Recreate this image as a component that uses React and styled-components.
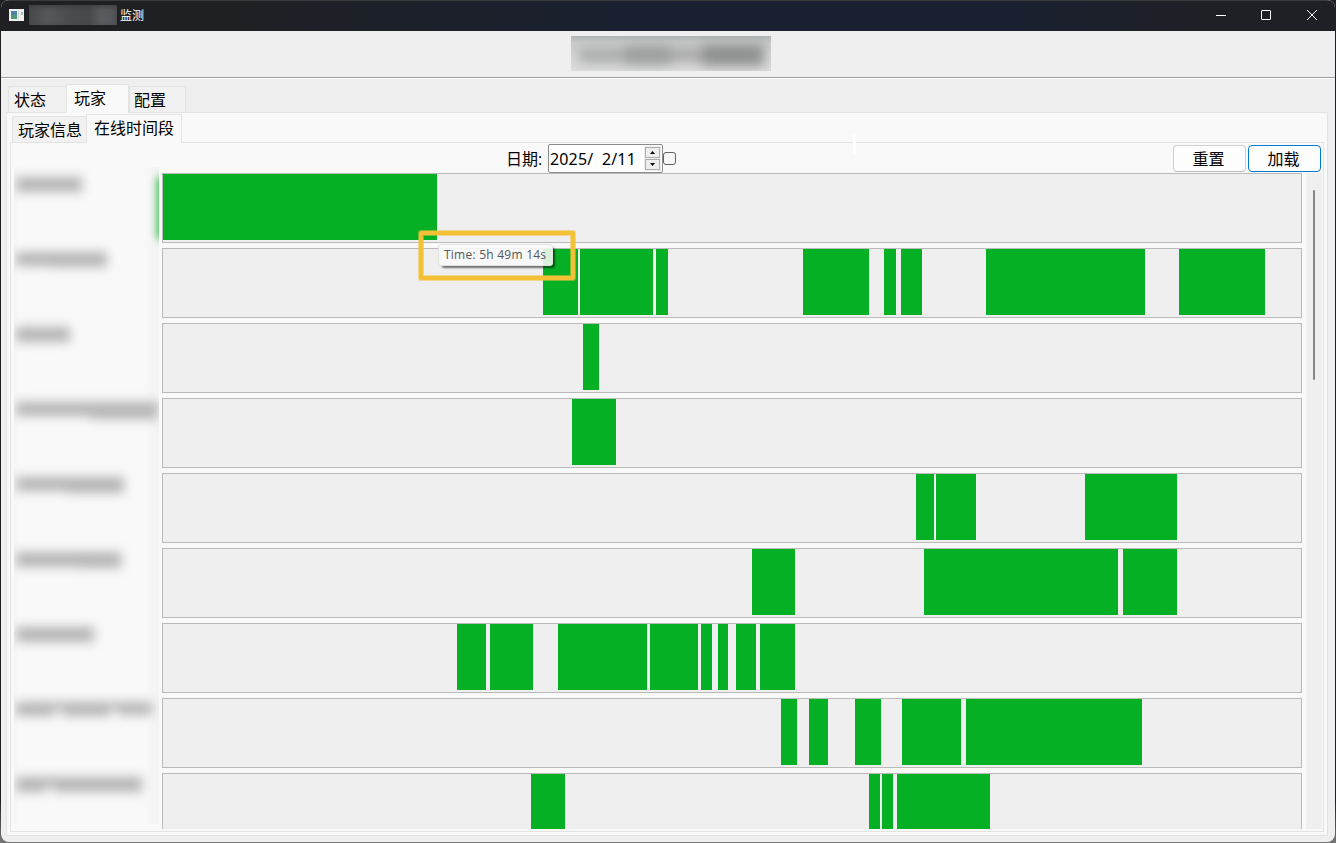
import React from "react";
import styled, { createGlobalStyle } from "styled-components";

const Global = createGlobalStyle`
  * { box-sizing: border-box; }
  body { margin: 0; background: #29292b; overflow: hidden; }
  button, input { font: inherit; }
`;

const Desktop = styled.div`
  width: 1336px;
  height: 843px;
  padding: 0 1px 1px;
  background: linear-gradient(#202022 0 800px, #777 843px);
  font: 16px/20px "Open Sans", "Noto Sans CJK SC", sans-serif;
  color: #000;
`;
const Window = styled.main`
  width: 1334px;
  height: 842px;
  display: flex;
  flex-direction: column;
  overflow: hidden;
  border-radius: 8px;
  background: #efefef;
`;
const TitleBar = styled.header`
  height: 31px;
  flex: none;
  display: flex;
  align-items: center;
  padding-left: 8px;
  border-top: 1px solid #3a3b3c;
  color: #fff;
  font-size: 12px;
  line-height: 16px;
  background: linear-gradient(90deg, #1e2023 0, #1e2023 16%, #1a2031 50%, #1a2031 74%, #1e2025 90%);
`;
const AppIcon = styled.svg`
  width: 15px;
  height: 12px;
  margin-bottom: 2px;
`;
const HiddenTitle = styled.span`
  width: 88px;
  height: 20px;
  margin: 0 3px 3px 5px;
  background: linear-gradient(90deg, #47494c, #55575a 22%, #484a4d 50%, #47494d 68%, #5b5c5f 82%, #535457);
  box-shadow: inset 0 2px 4px #3d3f42;
`;
const TitleText = styled.span`
  margin-bottom: 1px;
`;
const Controls = styled.div`
  margin-left: auto;
  display: flex;
  height: 30px;
`;
const Control = styled.button`
  width: 46px;
  height: 28px;
  padding: 0;
  border: 0;
  background: none;
  display: grid;
  place-items: center;
  svg { width: 12px; height: 12px; fill: none; stroke: #fff; }
`;
const Banner = styled.div`
  height: 48px;
  flex: none;
  display: flex;
  justify-content: center;
  align-items: flex-start;
  padding: 5px 0 0 6px;
  border-bottom: 1px solid #fff;
  box-shadow: inset 0 -1px #a0a0a0;
`;
const HiddenHeading = styled.div`
  width: 200px;
  height: 35px;
  padding: 2px 7px 0;
  overflow: hidden;
  background: linear-gradient(#b0b3b4 0, #c9cbcb 18%, #d6d7d7 50%, #dedede);
`;
const HeadingBlur = styled.div`
  height: 33px;
  display: flex;
  align-items: center;
  filter: blur(6px);
`;
const HeadingSmudge = styled.i`
  flex: ${(p) => p.$grow};
  height: ${(p) => p.$h}px;
  background: ${(p) => p.$tone};
`;
const Tabs = styled.nav`
  display: flex;
  align-items: flex-end;
  position: relative;
  z-index: 1;
  margin-bottom: -1px;
  flex: none;
`;
const OuterTabs = styled(Tabs)`
  height: 29px;
  margin: 5px 0 -1px 7px;
`;
const InnerTabs = styled(Tabs)`
  height: 29px;
  margin-left: 5px;
`;
const Tab = styled.button`
  width: ${(p) => p.$w}px;
  height: ${(p) => (p.$active ? 29 : 27)}px;
  padding: ${(p) => (p.$active ? "0 0 1px" : "0")};
  padding-left: ${(p) => p.$inset}px;
  border: 1px solid #e3e3e3;
  border-bottom-color: ${(p) => (p.$active ? "#f9f9f9" : "#e3e3e3")};
  border-right-width: ${(p) => (p.$join ? 0 : 1)}px;
  border-radius: 2px 2px 0 0;
  background: ${(p) => (p.$active ? "#f9f9f9" : "#f1f1f1")};
  color: #000;
  text-align: left;
  white-space: nowrap;
`;
const OuterPane = styled.section`
  height: 724px;
  margin: 0 7px 0 5px;
  padding: 1px 3px 3px 0;
  border: 1px solid #e3e3e3;
  background: #f9f9f9;
`;
const InnerPane = styled.section`
  width: 1314px;
  height: 690px;
  margin-left: 3px;
  padding: 1px 0 2px 3px;
  border: 1px solid #e3e3e3;
  background: #f9f9f9;
`;
const Toolbar = styled.div`
  height: 29px;
  display: flex;
  align-items: center;
  position: relative;
`;
const DateLabel = styled.label`
  margin-left: 492px;
  width: 42px;
  flex: none;
  white-space: nowrap;
`;
const DateBox = styled.div`
  width: 115px;
  height: 29px;
  flex: none;
  display: flex;
  align-items: center;
  padding-left: 1px;
  border: 1px solid #8b8b8b;
  border-radius: 2px;
  background: #fff;
`;
const DateText = styled.span`
  width: 94px;
  white-space: pre;
  font-family: "Noto Sans", sans-serif;
  letter-spacing: 0.15px;
`;
const Spinner = styled.div`
  width: 17px;
  height: 25px;
  padding: 1px;
  display: grid;
  grid-template-rows: 11px 11px;
  gap: 1px;
  background: #efefef;
`;
const Step = styled.button`
  padding: 0;
  border: 1px solid #adadad;
  background: #eee;
  display: grid;
  place-items: center;
  svg { width: 5px; height: 3px; display: block; }
`;
const Check = styled.input`
  appearance: none;
  width: 13px;
  height: 13px;
  flex: none;
  margin: 0;
  border: 1px solid #626262;
  border-radius: 3px;
  background: #f6f6f6;
`;
const Actions = styled.div`
  display: flex;
  gap: 2px;
  margin-left: auto;
  padding-right: 2px;
`;
const Action = styled.button`
  width: 73px;
  height: 27px;
  padding: 0 2px 0 0;
  border: 1px solid ${(p) => (p.$primary ? "#0078d4" : "#d0d0d0")};
  border-bottom-color: ${(p) => (p.$primary ? "#0078d4" : "#bcbcbc")};
  border-radius: 4px;
  background: #fdfdfd;
  color: #000;
`;
const StrayMark = styled.i`
  position: absolute;
  left: 839px;
  top: -11px;
  width: 3px;
  height: 21px;
  background: #fff;
`;
const Timeline = styled.div`
  display: flex;
  height: 656px;
`;
const ScrollArea = styled.div`
  height: 656px;
  display: flex;
  overflow: hidden;
`;
const Names = styled.aside`
  width: 145px;
  height: 657px;
  flex: none;
  margin: -6px 3px 0 0;
  overflow: hidden;
  background: linear-gradient(90deg, #f5f5f5 0, #f9f9f9 5px, #f9f9f9 132px, #f4f4f4 140px);
`;
const NameSlot = styled.div`
  height: 75px;
  padding: 10px 0 0 2px;
  display: flex;
  align-items: flex-start;
`;
const NameBlur = styled.div`
  display: flex;
  align-items: flex-start;
  filter: blur(5.5px);
`;
const NameSmudge = styled.i`
  flex: none;
  width: ${(p) => p.$w}px;
  height: ${(p) => p.$h + 3}px;
  background: #b4b4b4;
`;
const GreenBleed = styled.i`
  flex: none;
  width: 8px;
  height: 62px;
  margin: 0 -7px 0 auto;
  background: #06b025;
  filter: blur(4px);
`;
const Tracks = styled.div`
  width: 1140px;
  display: flex;
  flex-direction: column;
  gap: 5px;
  position: relative;
`;
const Track = styled.div`
  height: 70px;
  flex: none;
  display: flex;
  border: 1px solid #bababa;
  background: #efefef;
`;
const Bar = styled.i`
  flex: none;
  height: 66px;
  background: #06b025;
`;
const ScrollTrack = styled.div`
  width: 16px;
  height: 656px;
  margin-left: 4px;
  padding: 17px 0 0 7px;
  background: #efefef;
`;
const Thumb = styled.div`
  width: 2px;
  height: 190px;
  border-radius: 1px;
  background: #868686;
`;
const Highlight = styled.div`
  position: absolute;
  left: 257px;
  top: 58px;
  width: 156px;
  height: 49px;
  border: 4px solid #f4c036;
  border-radius: 2px;
  box-shadow: 0 0 0 1px #f4c03688, inset 0 0 0 1px #f4c03688;
`;
const Tooltip = styled.div`
  position: absolute;
  left: 276px;
  top: 71px;
  width: 115px;
  height: 22px;
  padding: 0 0 0 5px;
  border: 1px solid #e2e2e2;
  border-radius: 3px;
  background: #f9f9f9de;
  box-shadow: 3px 3px 2px -1px #0008;
  color: #575757;
  font: 12px/20px "Open Sans", sans-serif;
  letter-spacing: 0.24px;
  white-space: nowrap;
`;

// Online periods per player, as [start, end] offsets on the day's time axis.
const periods = [
  [[163, 437]],
  [[543, 578], [580, 653], [656, 668], [803, 869], [884, 896], [901, 922], [986, 1145], [1179, 1265]],
  [[583, 599]],
  [[572, 616]],
  [[916, 934], [936, 976], [1085, 1177]],
  [[752, 795], [924, 1118], [1123, 1177]],
  [[457, 486], [490, 533], [558, 647], [650, 698], [701, 712], [718, 728], [736, 756], [760, 795]],
  [[781, 797], [809, 828], [855, 881], [902, 961], [966, 1142]],
  [[531, 565], [869, 880], [882, 893], [897, 990]],
];
const dayStart = 163;

// Widths and heights of the obscured word parts in each player's name.
const nameParts = [
  [[66, 12]],
  [[34, 11], [57, 12]],
  [[54, 12]],
  [[74, 11], [68, 14]],
  [[51, 11], [57, 13]],
  [[62, 12], [43, 13]],
  [[78, 12]],
  [[38, 11], [8, 4], [48, 11], [8, 4], [34, 10]],
  [[30, 12], [8, 6], [88, 12]],
];

function TrackRow({ bars }) {
  return (
    <Track>
      {bars.map(([start, end], i) => (
        <Bar key={start} style={{ marginLeft: start - (i ? bars[i - 1][1] : dayStart), width: end - start }} />
      ))}
    </Track>
  );
}

export default function App() {
  return (
    <Desktop>
      <Global />
      <Window>
        <TitleBar>
          <AppIcon viewBox="0 0 15 12">
            <path fill="#f0f0f0" d="M0 0h15v12H0z" />
            <path fill="#4b87a1" d="M2 2h6v4H2z" />
            <path fill="#4e9a77" d="M2 6h6v4H2z" />
            <path fill="#d2d5d5" d="M9 1h1v10H9z" />
            <path fill="#9ebfad" d="M12 3h2v3h-2z" />
          </AppIcon>
          <HiddenTitle />
          <TitleText>监测</TitleText>
          <Controls>
            <Control aria-label="minimize"><svg viewBox="0 0 12 12"><path d="M2 6.5h10" /></svg></Control>
            <Control aria-label="maximize"><svg viewBox="0 0 12 12"><rect x="1.5" y="1.5" width="9" height="9" rx=".5" /></svg></Control>
            <Control aria-label="close"><svg viewBox="0 0 12 12"><path d="m1 1 10 10M11 1 1 11" /></svg></Control>
          </Controls>
        </TitleBar>
        <Banner>
          <HiddenHeading>
            <HeadingBlur>
              <HeadingSmudge $grow={3} $h={16} $tone="#acaeae" />
              <HeadingSmudge $grow={3} $h={20} $tone="#9b9e9d" />
              <HeadingSmudge $grow={2} $h={15} $tone="#a9aaa9" />
              <HeadingSmudge $grow={4} $h={22} $tone="#8f9190" />
            </HeadingBlur>
          </HiddenHeading>
        </Banner>
        <OuterTabs>
          <Tab $w={58} $inset={5} $join>状态</Tab>
          <Tab $w={63} $inset={7} $active>玩家</Tab>
          <Tab $w={57} $inset={4}>配置</Tab>
        </OuterTabs>
        <OuterPane>
          <InnerTabs>
            <Tab $w={74} $inset={5} $join>玩家信息</Tab>
            <Tab $w={96} $inset={7} $active>在线时间段</Tab>
          </InnerTabs>
          <InnerPane>
            <Toolbar>
              <DateLabel>日期:</DateLabel>
              <DateBox>
                <DateText>2025/  2/11</DateText>
                <Spinner>
                  <Step aria-label="up"><svg viewBox="0 0 5 3"><path d="M0 3 2.5 0 5 3z" /></svg></Step>
                  <Step aria-label="down"><svg viewBox="0 0 5 3"><path d="m0 0 2.5 3L5 0z" /></svg></Step>
                </Spinner>
              </DateBox>
              <Check type="checkbox" />
              <Actions>
                <Action>重置</Action>
                <Action $primary>加载</Action>
              </Actions>
              <StrayMark />
            </Toolbar>
            <Timeline>
              <Names>
                {nameParts.map((parts, row) => (
                  <NameSlot key={row}>
                    <NameBlur>
                      {parts.map(([w, h], i) => <NameSmudge key={i} $w={w} $h={h} />)}
                    </NameBlur>
                    {row === 0 && <GreenBleed />}
                  </NameSlot>
                ))}
              </Names>
              <ScrollArea>
                <Tracks>
                  {periods.map((bars, row) => <TrackRow key={row} bars={bars} />)}
                  <Highlight />
                  <Tooltip>Time: 5h 49m 14s</Tooltip>
                </Tracks>
                <ScrollTrack><Thumb /></ScrollTrack>
              </ScrollArea>
            </Timeline>
          </InnerPane>
        </OuterPane>
      </Window>
    </Desktop>
  );
}
